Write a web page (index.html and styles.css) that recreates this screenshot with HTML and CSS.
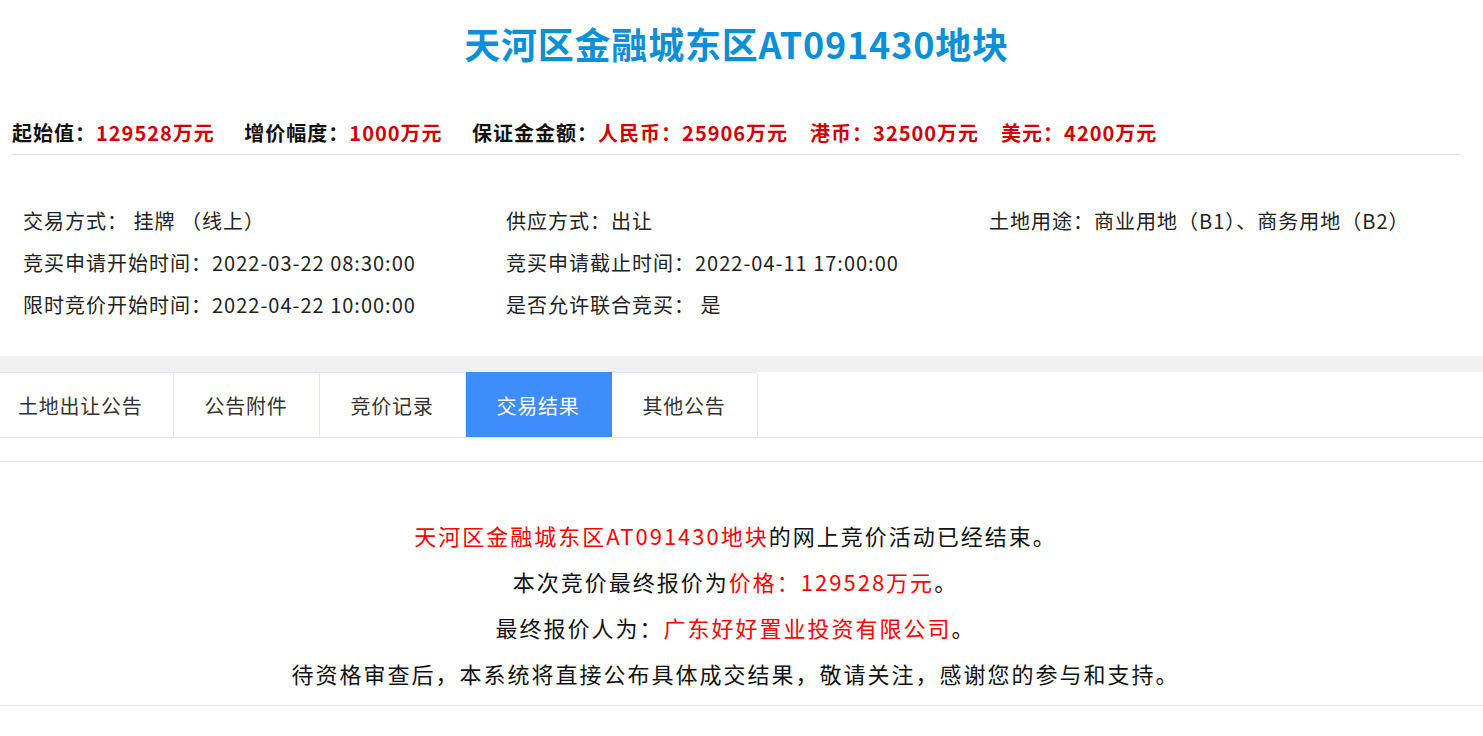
FILE: index.html
```html
<!DOCTYPE html>
<html lang="zh-CN">
<head>
<meta charset="utf-8">
<title>天河区金融城东区AT091430地块</title>
<link rel="stylesheet" href="styles.css">
</head>
<body>
<div class="page">
  <h1 class="title">天河区金融城东区AT091430地块</h1>
  <div class="price-bar">
    <span class="group"><span class="label">起始值：</span><span class="val">129528万元</span></span>
    <span class="group"><span class="label">增价幅度：</span><span class="val">1000万元</span></span>
    <span class="group"><span class="label">保证金金额：</span><span class="val sub">人民币：25906万元</span><span class="val sub">港币：32500万元</span><span class="val">美元：4200万元</span></span>
  </div>
  <div class="info-grid">
    <div class="cell">交易方式：&nbsp;挂牌 （线上）</div>
    <div class="cell">供应方式：出让</div>
    <div class="cell">土地用途：商业用地（B1）、商务用地（B2）</div>
    <div class="cell">竞买申请开始时间：2022-03-22 08:30:00</div>
    <div class="cell">竞买申请截止时间：2022-04-11 17:00:00</div>
    <div class="cell"></div>
    <div class="cell">限时竞价开始时间：2022-04-22 10:00:00</div>
    <div class="cell">是否允许联合竞买：&nbsp;是</div>
    <div class="cell"></div>
  </div>
  <div class="band"></div>
  <div class="tabs">
    <div class="tab">土地出让公告</div>
    <div class="tab">公告附件</div>
    <div class="tab">竞价记录</div>
    <div class="tab active">交易结果</div>
    <div class="tab last">其他公告</div>
  </div>
  <div class="spacer"></div>
  <div class="result">
    <p><span class="red">天河区金融城东区AT091430地块</span>的网上竞价活动已经结束。</p>
    <p>本次竞价最终报价为<span class="red">价格：129528万元</span>。</p>
    <p>最终报价人为：<span class="red">广东好好置业投资有限公司</span>。</p>
    <p>待资格审查后，本系统将直接公布具体成交结果，敬请关注，感谢您的参与和支持。</p>
  </div>
</div>
</body>
</html>
```
FILE: styles.css
```css
html, body {
  margin: 0;
  padding: 0;
  background: #fff;
}
body {
  font-family: "Noto Sans CJK SC", "Noto Sans", sans-serif;
  color: #333;
}
.title {
  margin: 0;
  height: 86px;
  line-height: 86px;
  text-align: center;
  font-size: 36px;
  font-weight: bold;
  color: #0b8fd6;
  letter-spacing: 0.8px;
  padding-right: 10px;
}
.price-bar {
  margin: 22px 23px 0 12px;
  padding: 14px 0 10px;
  line-height: 22px;
  font-size: 20px;
  font-weight: bold;
  letter-spacing: 1px;
  border-bottom: 1px solid #e2e2e2;
  white-space: nowrap;
  color: #111;
}
.group {
  margin-right: 24px;
}
.val {
  color: #d00000;
}
.val.sub {
  margin-right: 22px;
}
.info-grid {
  display: grid;
  grid-template-columns: 483px 483px 483px;
  padding: 45px 0 30px 23px;
  font-size: 20px;
  letter-spacing: 1px;
  color: #222;
}
.cell {
  height: 42px;
  line-height: 42px;
  white-space: nowrap;
}
.band {
  height: 16px;
  background: #f0f0f0;
}
.tabs {
  display: flex;
  height: 65px;
  border-bottom: 1px solid #e4e7ed;
}
.tab {
  padding: 0 31px;
  line-height: 65px;
  font-size: 20px;
  letter-spacing: 0.75px;
  color: #333;
  border-right: 1px solid #e4e7ed;
  border-top: 1px solid #e4e7ed;
  height: 64px;
}
.tab:first-child {
  padding-left: 18px;
  padding-right: 30px;
}
.tab.active {
  background: #3f8cfc;
  color: #fff;
  border-top-color: #3f8cfc;
  border-right-color: #3f8cfc;
}
.tab.last {
  border-top-right-radius: 3px;
}
.spacer {
  height: 23px;
}
.result {
  border-top: 1px solid #e6e6e6;
  border-bottom: 1px solid #e6e6e6;
  padding: 50px 12px 9px 0;
  text-align: center;
  font-size: 22px;
  letter-spacing: 2px;
  color: #111;
}
.result p {
  margin: 0;
  line-height: 46px;
}
.red {
  color: #ff0000;
}
```
